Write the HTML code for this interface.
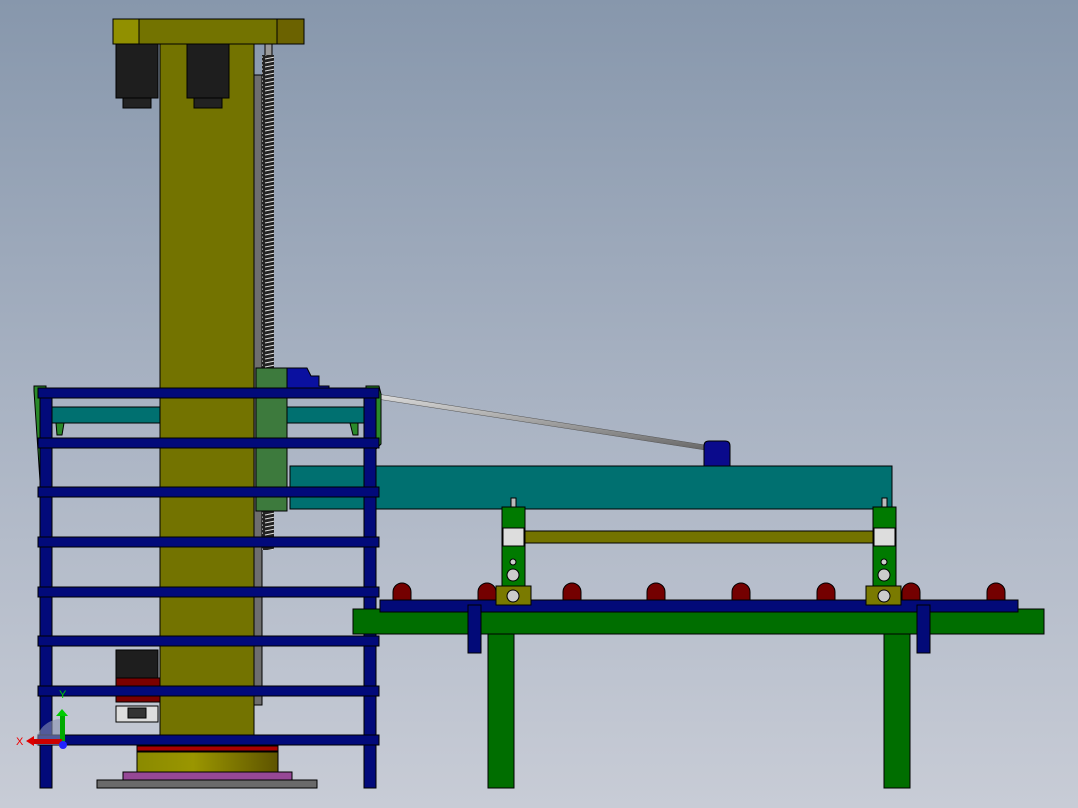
<!DOCTYPE html>
<html><head><meta charset="utf-8"><style>
html,body{margin:0;padding:0;width:1078px;height:808px;overflow:hidden}
svg{display:block}
</style></head><body>
<svg width="1078" height="808" viewBox="0 0 1078 808" xmlns="http://www.w3.org/2000/svg" font-family="Liberation Sans, sans-serif">
<defs>
<linearGradient id="bg" x1="0" y1="0" x2="0" y2="1">
<stop offset="0" stop-color="#8797ac"/><stop offset="0.5" stop-color="#a9b3c3"/><stop offset="1" stop-color="#c8ccd6"/>
</linearGradient>
<linearGradient id="gold" x1="0" y1="0" x2="1" y2="0">
<stop offset="0" stop-color="#8a8a00"/><stop offset="0.4" stop-color="#9a9600"/><stop offset="1" stop-color="#5e5400"/>
</linearGradient>
<linearGradient id="rod" x1="0" y1="0" x2="0" y2="1">
<stop offset="0" stop-color="#ddd"/><stop offset="1" stop-color="#666"/>
</linearGradient>
<pattern id="screw" width="12" height="4" patternUnits="userSpaceOnUse">
<rect width="12" height="4" fill="#222"/><line x1="1" y1="3" x2="11" y2="1" stroke="#ddd" stroke-width="1"/>
</pattern>
</defs>
<rect width="1078" height="808" fill="url(#bg)"/>
<g stroke="#000" stroke-width="1">
<rect x="265" y="44" width="7" height="12" fill="#999"/>
<rect x="254" y="75" width="8" height="630" fill="#6e6e6e"/>
<rect x="262" y="55" width="12" height="495" fill="url(#screw)" stroke="none"/>
<rect x="160" y="44" width="94" height="691" fill="#737300"/>
<rect x="113" y="19" width="191" height="25" fill="#737300"/>
<rect x="113" y="19" width="26" height="25" fill="#919000"/>
<rect x="277" y="19" width="27" height="25" fill="#6b6200"/>
<rect x="116" y="44" width="42" height="54" fill="#1e1e1e"/>
<rect x="123" y="98" width="28" height="10" fill="#222"/>
<rect x="187" y="44" width="42" height="54" fill="#1e1e1e"/>
<rect x="194" y="98" width="28" height="10" fill="#222"/>
<rect x="256" y="368" width="31" height="143" fill="#3d7a3d"/>
<path d="M287 368h20l4 8h8v10h10v6h-42z" fill="#0a10a0"/>
<polygon points="377,394 705,445 705,450 377,399" fill="url(#rod)" stroke="#555" stroke-width="0.5"/>
<path d="M704 466v-20q0-5 5-5h16q5 0 5 5v20z" fill="#0a0a8c"/>
<rect x="290" y="466" width="602" height="43" fill="#007070"/>
<rect x="52" y="407" width="108" height="16" fill="#007070"/>
<rect x="287" y="407" width="77" height="16" fill="#007070"/>
<path d="M34 386h12v95l-6 0l-6-90z" fill="#2a8a2a"/>
<path d="M366 386h13l2 8v50l-6 6h-9z" fill="#2a8a2a"/>
<path d="M56 423h8l-2 12h-5z M350 423h8v12h-5z" fill="#2a8a2a"/>
<rect x="116" y="650" width="42" height="38" fill="#1e1e1e"/>
<rect x="116" y="678" width="44" height="24" fill="#7a0000"/>
<rect x="116" y="706" width="42" height="16" fill="#ddd"/>
<rect x="128" y="708" width="18" height="10" fill="#333"/>
<rect x="137" y="746" width="141" height="5" fill="#aa0000"/>
<rect x="137" y="752" width="141" height="20" fill="url(#gold)"/>
<rect x="123" y="772" width="169" height="8" fill="#964896"/>
<rect x="97" y="780" width="220" height="8" fill="#6a6a6a"/>
<g fill="#020a7a">
<rect x="40" y="390" width="12" height="398"/>
<rect x="364" y="390" width="12" height="398"/>
<rect x="38" y="388" width="341" height="10"/>
<rect x="38" y="438" width="341" height="10"/>
<rect x="38" y="487" width="341" height="10"/>
<rect x="38" y="537" width="341" height="10"/>
<rect x="38" y="587" width="341" height="10"/>
<rect x="38" y="636" width="341" height="10"/>
<rect x="38" y="686" width="341" height="10"/>
<rect x="38" y="735" width="341" height="10"/>
</g>
<rect x="353" y="609" width="691" height="25" fill="#006e00"/>
<rect x="488" y="634" width="26" height="154" fill="#006e00"/>
<rect x="884" y="634" width="26" height="154" fill="#006e00"/>
<rect x="380" y="600" width="638" height="12" fill="#020a78"/>
<rect x="468" y="605" width="13" height="48" fill="#020a78"/>
<rect x="917" y="605" width="13" height="48" fill="#020a78"/>
<g fill="#740000">
<path d="M393 600v-8a9 9 0 0 1 18 0v8z"/><path d="M478 600v-8a9 9 0 0 1 18 0v8z"/>
<path d="M563 600v-8a9 9 0 0 1 18 0v8z"/><path d="M647 600v-8a9 9 0 0 1 18 0v8z"/>
<path d="M732 600v-8a9 9 0 0 1 18 0v8z"/><path d="M817 600v-8a9 9 0 0 1 18 0v8z"/>
<path d="M902 600v-8a9 9 0 0 1 18 0v8z"/><path d="M987 600v-8a9 9 0 0 1 18 0v8z"/>
</g>
<rect x="525" y="531" width="348" height="12" fill="#737300"/>
<g>
<rect x="511" y="498" width="5" height="9" fill="#bbb"/>
<rect x="502" y="507" width="23" height="93" fill="#007a00"/>
<rect x="503" y="528" width="21" height="18" fill="#ddd"/>
<circle cx="513" cy="562" r="3" fill="#ccc"/><circle cx="513" cy="575" r="6" fill="#ccc"/>
<rect x="496" y="586" width="35" height="19" fill="#7a7a00"/><circle cx="513" cy="596" r="6" fill="#ccc"/>
<rect x="882" y="498" width="5" height="9" fill="#bbb"/>
<rect x="873" y="507" width="23" height="93" fill="#007a00"/>
<rect x="874" y="528" width="21" height="18" fill="#ddd"/>
<circle cx="884" cy="562" r="3" fill="#ccc"/><circle cx="884" cy="575" r="6" fill="#ccc"/>
<rect x="866" y="586" width="35" height="19" fill="#7a7a00"/><circle cx="884" cy="596" r="6" fill="#ccc"/>
</g>
</g>
<path d="M36 745a25 25 0 0 1 26-26v26z" fill="#8890b0" opacity="0.6"/>
<rect x="60" y="715" width="5" height="30" fill="#0a0"/>
<path d="M56 716l6-7 6 7z" fill="#0c0"/>
<rect x="32" y="739" width="30" height="5" fill="#c00"/>
<path d="M34 736l-8 5 8 5z" fill="#d00"/>
<circle cx="63" cy="745" r="4" fill="#22f"/>
<text x="16" y="745" font-size="11" fill="#e00">X</text>
<text x="59" y="698" font-size="11" fill="#0c0">Y</text>
</svg>
</body></html>
